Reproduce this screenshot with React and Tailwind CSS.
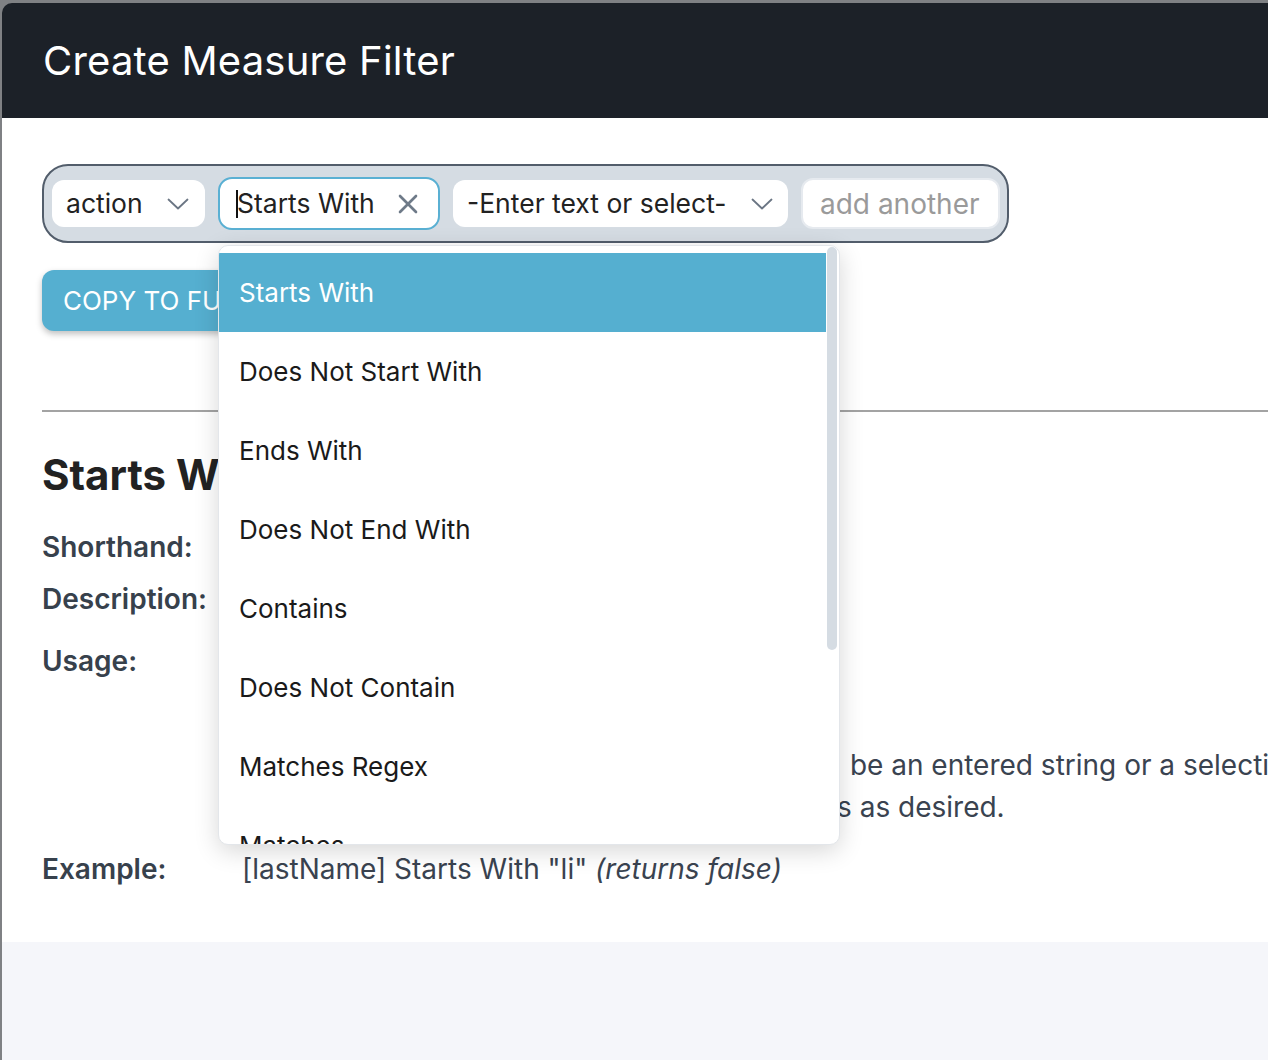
import React from 'react';

const OPTIONS = [
  'Starts With',
  'Does Not Start With',
  'Ends With',
  'Does Not End With',
  'Contains',
  'Does Not Contain',
  'Matches Regex',
  'Matches',
];

function Chevron() {
  return (
    <svg width="22" height="12" viewBox="0 0 22 12" fill="none">
      <polyline points="1.5,1.5 11,10.5 20.5,1.5" stroke="#6b7684" strokeWidth="1.8" strokeLinecap="round" strokeLinejoin="round" />
    </svg>
  );
}

function ClearIcon() {
  return (
    <svg width="20" height="20" viewBox="0 0 20 20" fill="none">
      <line x1="2" y1="2" x2="18" y2="18" stroke="#6e7a88" strokeWidth="2.6" strokeLinecap="round" />
      <line x1="18" y1="2" x2="2" y2="18" stroke="#6e7a88" strokeWidth="2.6" strokeLinecap="round" />
    </svg>
  );
}

function FilterBar() {
  return (
    <div className="relative w-[967px] h-[79px] rounded-[26px] border-2 border-[#525d6b] bg-[#d5dce3] flex items-center pl-[8px] gap-[13px] text-[26.5px]">
      {/* campo */}
      <div className="w-[153px] h-[47px] rounded-[12px] bg-white flex items-center justify-between pl-[14px] pr-[16px]">
        <span>action</span>
        <Chevron />
      </div>

      {/* operador (aberto) */}
      <div className="w-[222px] h-[53px] rounded-[14px] bg-white border-2 border-[#5ab0d3] flex items-center justify-between pl-[16px] pr-[20px]">
        <span className="flex items-center">
          <span className="w-[2px] h-[28px] bg-[#111] -mr-[1px]" />
          <span>Starts With</span>
        </span>
        <ClearIcon />
      </div>

      {/* valor */}
      <div className="w-[335px] h-[47px] rounded-[12px] bg-white flex items-center justify-between pl-[14px] pr-[15px]">
        <span>-Enter text or select-</span>
        <Chevron />
      </div>

      <div className="w-[199px] h-[51px] rounded-[12px] bg-white border-2 border-[#e6eaef] flex items-center pl-[17px] text-[28px] text-[#9a9a9a]">
        add another
      </div>

      {/* menu de opções */}
      <div className="absolute left-[174px] top-[79px] w-[622px] h-[600px] bg-white rounded-[10px] border border-[#e3e6ea] shadow-[0_6px_24px_rgba(0,0,0,0.16)] overflow-hidden flex z-10 text-[26px]">
        <div className="flex-1 pt-[7px]">
          {OPTIONS.map((opt, i) => (
            <div
              key={opt}
              className={
                'h-[79px] flex items-center pl-[20px] ' +
                (i === 0 ? 'bg-[#55afd0] text-white' : 'text-[#1a1a1a]')
              }
            >
              {opt}
            </div>
          ))}
        </div>
        <div className="w-[13px] pt-[1px] pl-[1px]">
          <div className="w-[10px] h-[403px] rounded-full bg-[#d5dce3]" />
        </div>
      </div>
    </div>
  );
}

function Row({ label, children, className = '' }) {
  return (
    <div className={'flex text-[28px] leading-[42px] ' + className}>
      <div className="w-[200px] shrink-0 font-semibold text-[#37414c]">{label}</div>
      <div className="text-[#3a4350] whitespace-nowrap">{children}</div>
    </div>
  );
}

export default function App() {
  return (
    <div className="w-[1268px] h-[1060px] overflow-hidden bg-[#7f8184] font-['Inter','Liberation_Sans',sans-serif] text-[26px]">
      <div className="ml-[2px] mt-[3px] w-[1400px] h-[1057px] rounded-tl-[10px] overflow-hidden flex flex-col">
        <header className="h-[115px] bg-[#1c2128] flex items-center pl-[41px] shrink-0">
          <h1 className="text-[40px] text-white font-normal tracking-[0.2px]">Create Measure Filter</h1>
        </header>

        <main className="bg-white pl-[40px] pt-[46px] pb-[52px] text-[#222]">
          <FilterBar />

          <button className="mt-[27px] h-[61px] pl-[21px] pr-[22px] rounded-[12px] bg-[#55afd0] text-white uppercase shadow-[0_3px_6px_rgba(0,0,0,0.25)]">
            Copy to Function
          </button>

          <div className="mt-[79px] h-[2px] bg-[#a3a3a3]" />

          <h2 className="mt-[38px] text-[42px] leading-[50px] font-bold text-[#222]">Starts With</h2>

          <Row label="Shorthand:" className="mt-[26px]">SW</Row>
          <Row label="Description:" className="mt-[10px]">Field begins with value</Row>
          <Row label="Usage:" className="mt-[20px]">
            <div>[field] Starts With "value"</div>
            <div>[field] Starts With [field]</div>
            <div className="mt-[20px]">
              <span className="inline-block w-[600px] overflow-hidden align-top">The value to compare against can</span>
              {' '}be an entered string or a selection from the list
            </div>
            <div>
              <span className="inline-block w-[595px] overflow-hidden align-top">Use add another to combine condition</span>
              s as desired.
            </div>
          </Row>
          <Row label="Example:" className="mt-[20px]">
            [lastName] Starts With "li" <i>(returns false)</i>
          </Row>
        </main>

        <div className="flex-1 bg-[#f5f6fa]" />
      </div>
    </div>
  );
}
